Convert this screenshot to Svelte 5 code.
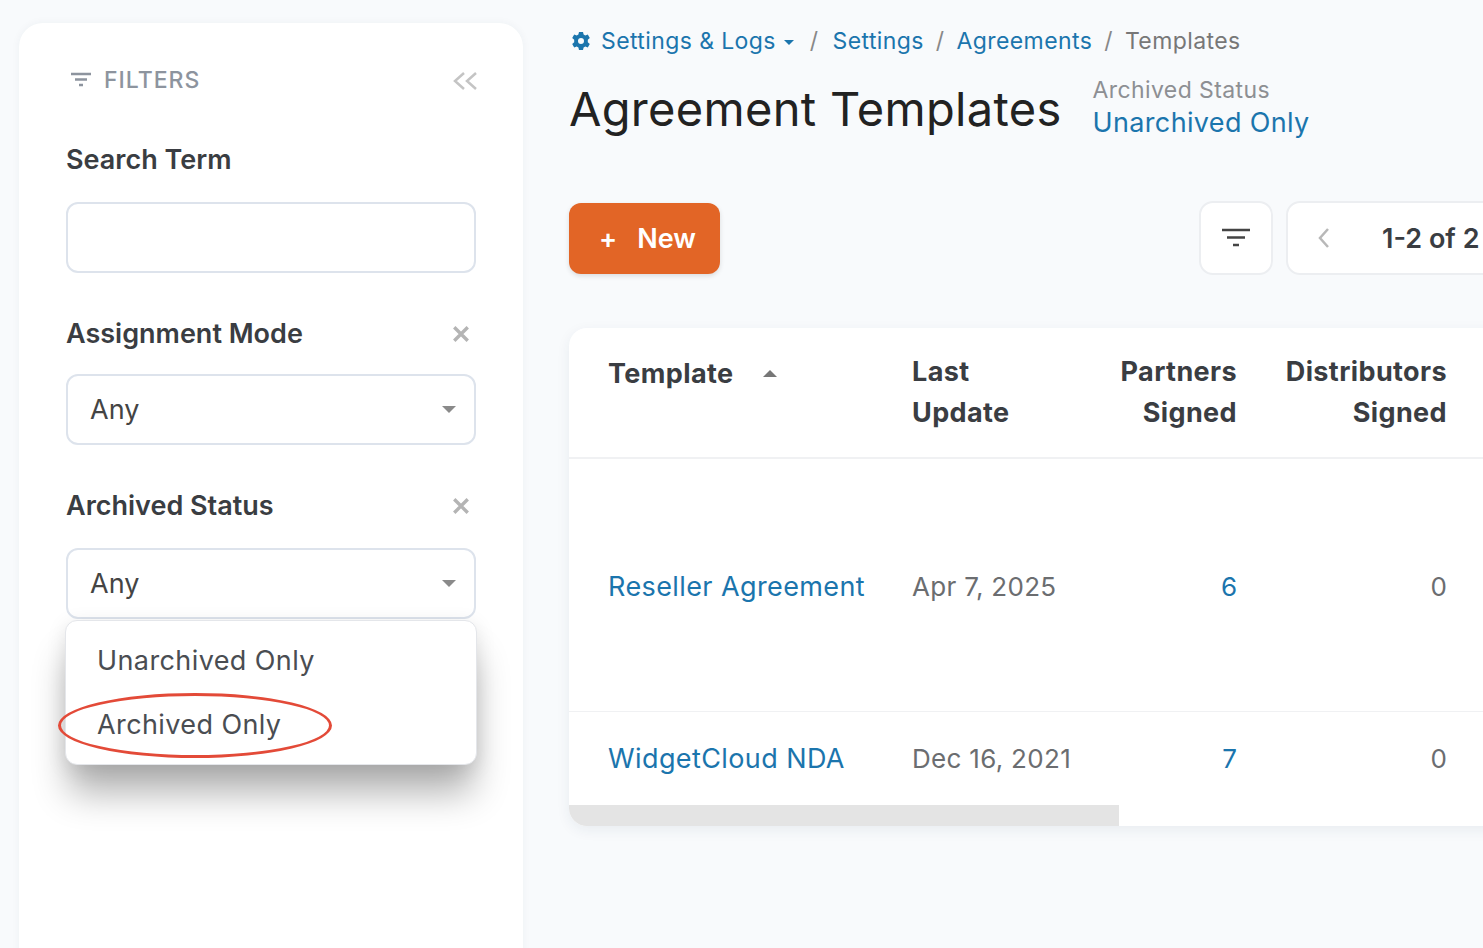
<script>
    let rows = [
        { name: 'Reseller Agreement', date: 'Apr 7, 2025', partners: 6, distributors: 0, cls: 'tall' },
        { name: 'WidgetCloud NDA', date: 'Dec 16, 2021', partners: 7, distributors: 0, cls: 'short' }
    ];
</script>

<div class="page">
    <aside class="sidebar">
        <div class="side-head">
            <span class="filters-title">
                <svg width="22" height="16" viewBox="0 0 22 16"><path d="M1 2h20M5 7.500h12M9 13h4" stroke="#8d949e" stroke-width="2.500" fill="none"/></svg>
                FILTERS
            </span>
            <svg class="collapse" width="26" height="20" viewBox="0 0 26 20"><path d="M12 2 3 10l9 8M24 2l-9 8 9 8" stroke="#c4c4c4" stroke-width="2.500" fill="none"/></svg>
        </div>

        <div class="field-label search-label">Search Term</div>
        <div class="input"></div>

        <div class="field-label mode-label">
            Assignment Mode
            <svg class="clear" width="18" height="18" viewBox="0 0 16 16"><path d="M2 2l12 12M14 2 2 14" stroke="#b4b4b4" stroke-width="3"/></svg>
        </div>
        <div class="input select">Any<span class="caret"></span></div>

        <div class="field-label status-label">
            Archived Status
            <svg class="clear" width="18" height="18" viewBox="0 0 16 16"><path d="M2 2l12 12M14 2 2 14" stroke="#b4b4b4" stroke-width="3"/></svg>
        </div>
        <div class="select-wrap">
            <div class="input select">Any<span class="caret"></span></div>
            <div class="menu">
                <div class="option">Unarchived Only</div>
                <div class="option">Archived Only</div>
            </div>
            <div class="annotation"></div>
        </div>
    </aside>

    <main class="content">
        <nav class="crumbs">
            <svg width="20" height="20" viewBox="0 0 20 20"><path fill="#1b75ad" fill-rule="evenodd" d="M8 1h4l.6 2.600 1.700.9 2.500-.9 2 3.400-2 1.800v2.400l2 1.800-2 3.400-2.500-.9-1.700.9L12 19H8l-.6-2.600-1.700-.9-2.500.9-2-3.400 2-1.800V8.800l-2-1.800 2-3.400 2.500.9 1.700-.9zM10 7a3 3 0 1 0 0 6 3 3 0 0 0 0-6z"/></svg>
            <a class="first">Settings &amp; Logs<span class="mini-caret"></span></a>
            <span class="sep first-sep">/</span>
            <a>Settings</a>
            <span class="sep">/</span>
            <a>Agreements</a>
            <span class="sep">/</span>
            <span class="current">Templates</span>
        </nav>

        <header class="title-row">
            <h1>Agreement Templates</h1>
            <div class="status">
                <div class="status-name">Archived Status</div>
                <div class="status-value">Unarchived Only</div>
            </div>
        </header>

        <div class="toolbar">
            <button class="btn-new"><span class="plus">+</span>New</button>
            <div class="tools">
                <button class="btn-filter" aria-label="Filter">
                    <svg width="30" height="20" viewBox="0 0 30 20"><path d="M1 2h28M6 9.500h18M12 17h6" stroke="#444" stroke-width="2.500" fill="none"/></svg>
                </button>
                <div class="pager">
                    <svg width="14" height="22" viewBox="0 0 14 22"><path d="M11 2 3 11l8 9" stroke="#b8b8b8" stroke-width="2.500" fill="none"/></svg>
                    <span>1-2 of 2</span>
                </div>
            </div>
        </div>

        <div class="table-card">
            <table>
                <colgroup>
                    <col style="width: 319px" />
                    <col style="width: 208px" />
                    <col style="width: 165px" />
                    <col style="width: 210px" />
                    <col />
                </colgroup>
                <thead>
                    <tr>
                        <th class="first-col"><span class="sort-head">Template<span class="sort-arrow"></span></span></th>
                        <th>Last<br />Update</th>
                        <th class="num">Partners<br />Signed</th>
                        <th class="num">Distributors<br />Signed</th>
                        <th></th>
                    </tr>
                </thead>
                <tbody>
                    {#each rows as r}
                        <tr class={r.cls}>
                            <td class="first-col link">{r.name}</td>
                            <td class="muted date">{r.date}</td>
                            <td class="num link">{r.partners}</td>
                            <td class="num muted">{r.distributors}</td>
                            <td></td>
                        </tr>
                    {/each}
                </tbody>
            </table>
            <div class="scrollbar"><div class="thumb"></div></div>
        </div>
    </main>
</div>

<style>
    :global(body) {
        background-color: #f8fafc;
        font-family: 'Inter', 'Noto Sans', sans-serif;
        color: #333;
        margin: 0;
        padding: 0;
    }

    .page {
        display: flex;
        height: 948px;
        overflow: hidden;
        padding: 23px 0 0 19px;
        box-sizing: border-box;
    }

    /* Sidebar */
    .sidebar {
        flex: none;
        width: 504px;
        height: 1000px;
        box-sizing: border-box;
        padding: 40px 47px 0;
        background: #fff;
        border-radius: 24px;
        box-shadow: 0 0 8px rgba(30, 50, 80, 0.05);
    }

    .side-head {
        display: flex;
        justify-content: space-between;
        align-items: center;
        height: 32px;
    }

    .filters-title {
        display: flex;
        align-items: center;
        gap: 12px;
        padding-left: 4px;
        padding-top: 1px;
        font-size: 23px;
        font-weight: 500;
        letter-spacing: 1px;
        color: #8d949e;
    }

    .collapse {
        margin-top: 4px;
        margin-right: -2px;
    }

    .field-label {
        display: flex;
        justify-content: space-between;
        align-items: center;
        padding-top: 1px;
        font-size: 27px;
        font-weight: 600;
        line-height: 35px;
        color: #3a3d42;
    }

    .search-label { margin-top: 46px; margin-bottom: 25px; }
    .mode-label { margin-top: 42px; margin-bottom: 23px; }
    .status-label { margin-top: 42px; margin-bottom: 25px; }

    .clear {
        margin-right: 6px;
    }

    .input {
        height: 71px;
        box-sizing: border-box;
        background: #fff;
        border: 2px solid #dde3ec;
        border-radius: 12px;
    }

    .select {
        display: flex;
        align-items: center;
        justify-content: space-between;
        padding: 0 18px 0 22px;
        font-size: 27px;
        color: #444;
    }

    .caret {
        width: 0;
        height: 0;
        border-left: 7.500px solid transparent;
        border-right: 7.500px solid transparent;
        border-top: 7px solid #8a8a8a;
    }

    .select-wrap {
        position: relative;
    }

    .menu {
        position: absolute;
        top: 72px;
        left: -1px;
        right: -1px;
        height: 145px;
        box-sizing: border-box;
        padding-top: 7px;
        background: #fff;
        border: 1px solid #e4e6ea;
        border-radius: 12px;
        box-shadow: 0 32px 36px -4px rgba(0, 0, 0, 0.3), 0 4px 20px rgba(0, 0, 0, 0.1);
    }

    .option {
        height: 64px;
        display: flex;
        align-items: center;
        padding-left: 31px;
        font-size: 27px;
        letter-spacing: 0.4px;
        color: #4a4d52;
    }

    .annotation {
        position: absolute;
        left: -8px;
        top: 145px;
        width: 274px;
        height: 65px;
        box-sizing: border-box;
        border: 3.500px solid #e34a38;
        border-radius: 50%;
    }

    /* Main column */
    .content {
        flex: none;
        width: 1100px;
        margin-left: 46px;
    }

    .crumbs {
        display: flex;
        align-items: center;
        height: 36px;
        font-size: 23px;
        letter-spacing: 0.4px;
        color: #1b75ad;
    }

    .crumbs svg {
        margin-left: 2px;
        margin-right: 10px;
    }

    .mini-caret {
        display: inline-block;
        margin-left: 8px;
        vertical-align: middle;
        border-left: 5px solid transparent;
        border-right: 5px solid transparent;
        border-top: 5px solid #1b75ad;
    }

    .sep {
        margin: 0 12px;
        color: #888;
    }

    .first-sep {
        margin-left: 16px;
        margin-right: 14px;
    }

    .current {
        color: #777;
    }

    .title-row {
        display: flex;
        align-items: center;
        gap: 31px;
        margin-top: 12px;
        height: 74px;
    }

    h1 {
        margin: 0;
        font-size: 47px;
        font-weight: 400;
        letter-spacing: 0.3px;
        color: #222;
    }

    .status {
        margin-top: -2px;
    }

    .status-name {
        font-size: 23px;
        line-height: 30px;
        letter-spacing: 0.4px;
        color: #8d8f93;
    }

    .status-value {
        font-size: 27px;
        line-height: 35px;
        letter-spacing: 0.35px;
        color: #1b75ad;
    }

    .toolbar {
        display: flex;
        justify-content: space-between;
        align-items: center;
        margin-top: 56px;
    }

    .btn-new {
        width: 151px;
        height: 71px;
        padding: 0 0 0 6px;
        border: none;
        border-radius: 12px;
        background-color: #e26526;
        color: #fff;
        font-family: inherit;
        font-size: 27px;
        font-weight: 600;
        box-shadow: 0 2px 5px rgba(0, 0, 0, 0.12);
    }

    .plus {
        margin-right: 20px;
    }

    .tools {
        display: flex;
        gap: 13px;
        margin-right: 43px;
    }

    .btn-filter, .pager {
        height: 74px;
        box-sizing: border-box;
        background: #fff;
        border: 2px solid #eceef1;
        border-radius: 14px;
        display: flex;
        align-items: center;
    }

    .btn-filter {
        width: 74px;
        justify-content: center;
        padding: 0;
    }

    .pager {
        width: 340px;
        padding-left: 29px;
        gap: 51px;
        font-size: 27px;
        font-weight: 600;
        color: #3a3d42;
    }

    /* Table */
    .table-card {
        margin-top: 53px;
        background: #fff;
        border-radius: 18px;
        overflow: hidden;
        box-shadow: 0 4px 14px rgba(30, 50, 80, 0.07);
    }

    table {
        width: 100%;
        table-layout: fixed;
        border-collapse: collapse;
        text-align: left;
        font-size: 26px;
        white-space: nowrap;
    }

    th {
        height: 130px;
        box-sizing: border-box;
        padding: 23px 24px 0;
        vertical-align: top;
        font-size: 27px;
        line-height: 41px;
        font-weight: 700;
        letter-spacing: 0.4px;
        color: #3a3d42;
        border-bottom: 2px solid #f0f1f3;
    }

    td {
        padding: 0 24px;
        border-bottom: 1px solid #f0f1f3;
    }

    tbody tr:last-child td {
        border-bottom: none;
    }

    .tall td { height: 250px; padding-top: 2px; }
    .short td { height: 93px; }

    th.first-col, td.first-col {
        padding-left: 39px;
    }

    td.first-col {
        font-size: 27px;
        letter-spacing: 0.4px;
    }

    .date { letter-spacing: 0.3px; }
    .num { text-align: right; }
    .link { color: #1b75ad; }
    .muted { color: #6b6d70; }

    .sort-head {
        display: inline-flex;
        align-items: center;
        margin-top: 2px;
    }

    .sort-arrow {
        margin-left: 29px;
        border-left: 7.500px solid transparent;
        border-right: 7.500px solid transparent;
        border-bottom: 7px solid #777;
    }

    .scrollbar {
        height: 21px;
        background: #fff;
    }

    .thumb {
        width: 550px;
        height: 100%;
        background: #e4e4e4;
    }
</style>
